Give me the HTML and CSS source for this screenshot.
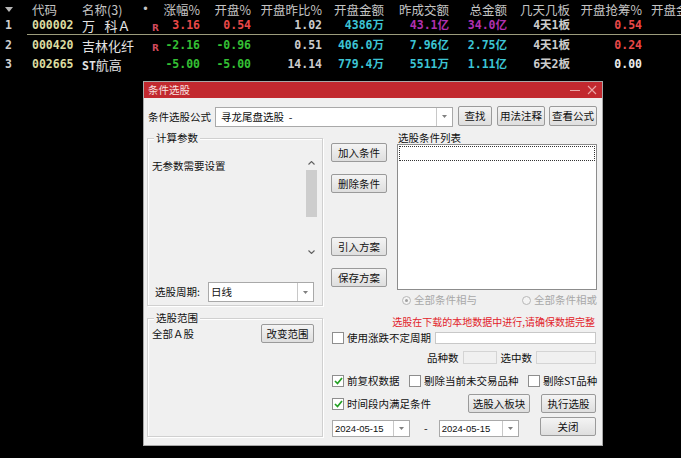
FILE: index.html
```html
<!doctype html>
<html lang="zh-CN">
  <head>
    <meta charset="UTF-8" />
    <title>条件选股</title>
    <link rel="stylesheet" href="styles.css">
  </head>
  <body>
    <div class="quotes">
      <div class="qrow head">
        <span class="c-idx"><svg width="8" height="6" viewBox="0 0 8 6"><polygon points="0,0 8,0 4,5" fill="#b8b8b8"/></svg></span>
        <span class="c-code cjk">代码</span>
        <span class="c-name cjk">名称(3)</span>
        <span class="c-flag">•</span>
        <span class="num cjk">涨幅%</span>
        <span class="num cjk">开盘%</span>
        <span class="num cjk">开盘昨比%</span>
        <span class="num cjk">开盘金额</span>
        <span class="num cjk">昨成交额</span>
        <span class="num cjk">总金额</span>
        <span class="num cjk">几天几板</span>
        <span class="num cjk">开盘抢筹%</span>
        <span class="c-last cjk">开盘金</span>
      </div>
      <div class="qrow sel">
        <span class="c-idx">1</span>
        <span class="c-code">000002</span>
        <span class="c-name cjk">万&ensp; 科Ａ</span>
        <span class="c-flag"><b class="r">R</b></span>
        <span class="num red">3.16</span>
        <span class="num red">0.54</span>
        <span class="num gray">1.02</span>
        <span class="num cyan">4386万</span>
        <span class="num purple">43.1亿</span>
        <span class="num purple">34.0亿</span>
        <span class="num gray">4天1板</span>
        <span class="num red">0.54</span>
        <span class="c-last"></span>
      </div>
      <div class="qrow">
        <span class="c-idx">2</span>
        <span class="c-code">000420</span>
        <span class="c-name cjk">吉林化纤</span>
        <span class="c-flag"><b class="r">R</b></span>
        <span class="num green">-2.16</span>
        <span class="num green">-0.96</span>
        <span class="num gray">0.51</span>
        <span class="num cyan">406.0万</span>
        <span class="num cyan">7.96亿</span>
        <span class="num cyan">2.75亿</span>
        <span class="num gray">4天1板</span>
        <span class="num red">0.24</span>
        <span class="c-last"></span>
      </div>
      <div class="qrow">
        <span class="c-idx">3</span>
        <span class="c-code">002665</span>
        <span class="c-name cjk"><b class="st">ST</b>航高</span>
        <span class="c-flag"></span>
        <span class="num green">-5.00</span>
        <span class="num green">-5.00</span>
        <span class="num gray">14.14</span>
        <span class="num cyan">779.4万</span>
        <span class="num cyan">5511万</span>
        <span class="num cyan">1.11亿</span>
        <span class="num gray">6天2板</span>
        <span class="num white">0.00</span>
        <span class="c-last"></span>
      </div>
    </div>

    <div class="dialog">
      <div class="titlebar">
        <span class="title">条件选股</span>
        <span class="win-btns">
          <svg width="10" height="10" viewBox="0 0 10 10"><line x1="0" y1="5.5" x2="10" y2="5.5" stroke="#eaa6a6" stroke-width="1"/></svg>
          <svg width="10" height="10" viewBox="0 0 10 10"><path d="M1 1 L9 9 M9 1 L1 9" stroke="#eaa6a6" stroke-width="1.1"/></svg>
        </span>
      </div>

      <div class="dlg-body">
        <div class="formula-row">
          <span class="formula-label">条件选股公式</span>
          <div class="combo formula-combo">
            <span class="combo-text">寻龙尾盘选股&nbsp;&nbsp;-</span>
            <span class="combo-arrow"><svg width="5" height="3" viewBox="0 0 5 3"><polygon points="0,0 5,0 2.5,3" fill="#808080"/></svg></span>
          </div>
          <button class="btn btn-find">查找</button>
          <button class="btn btn-wide">用法注释</button>
          <button class="btn btn-wide btn-tight">查看公式</button>
        </div>

        <div class="main">
          <div class="left-col">
            <div class="group group-params">
              <span class="group-title">计算参数</span>
              <div class="params">
                <span class="params-text">无参数需要设置</span>
                <div class="vscroll">
                  <span class="sb-arrow"><svg width="7" height="4" viewBox="0 0 7 4"><polyline points="0.5,3.5 3.5,0.5 6.5,3.5" fill="none" stroke="#606060" stroke-width="1.1"/></svg></span>
                  <span class="sb-thumb"></span>
                  <span class="sb-track"></span>
                  <span class="sb-arrow"><svg width="7" height="4" viewBox="0 0 7 4"><polyline points="0.5,0.5 3.5,3.5 6.5,0.5" fill="none" stroke="#606060" stroke-width="1.1"/></svg></span>
                </div>
              </div>
              <div class="period-row">
                <span>选股周期:</span>
                <div class="combo period-combo">
                  <span class="combo-text">日线</span>
                  <span class="combo-arrow"><svg width="5" height="3" viewBox="0 0 5 3"><polygon points="0,0 5,0 2.5,3" fill="#808080"/></svg></span>
                </div>
              </div>
            </div>

            <div class="group group-range">
              <span class="group-title">选股范围</span>
              <div class="range-row">
                <span>全部Ａ股</span>
                <button class="btn btn-range">改变范围</button>
              </div>
            </div>
          </div>

          <div class="right-col">
            <div class="top-block">
              <div class="btn-col">
                <button class="btn btn-side">加入条件</button>
                <button class="btn btn-side">删除条件</button>
                <button class="btn btn-side gap-big">引入方案</button>
                <button class="btn btn-side">保存方案</button>
              </div>
              <div class="list-col">
                <span class="list-label">选股条件列表</span>
                <div class="listbox"><div class="focus-row"></div></div>
              </div>
            </div>

            <div class="radio-row">
              <span class="radio-item"><span class="radio on"></span>全部条件相与</span>
              <span class="radio-item second"><span class="radio"></span>全部条件相或</span>
            </div>

            <div class="warn">选股在下载的本地数据中进行,请确保数据完整</div>

            <div class="check-row">
              <span class="check"></span>
              <span class="check-text">使用涨跌不定周期</span>
              <span class="field field-period"></span>
            </div>

            <div class="count-row">
              <span>品种数</span>
              <span class="field field-count"></span>
              <span>选中数</span>
              <span class="field field-sel"></span>
            </div>

            <div class="opt-row">
              <span class="opt"><span class="check on"><svg width="9" height="8" viewBox="0 0 9 8"><polyline points="1,4 3.5,6.5 8,1" fill="none" stroke="#23a023" stroke-width="1.7"/></svg></span>前复权数据</span>
              <span class="opt"><span class="check"></span>剔除当前未交易品种</span>
              <span class="opt"><span class="check"></span>剔除ST品种</span>
            </div>

            <div class="time-row">
              <span class="opt"><span class="check on"><svg width="9" height="8" viewBox="0 0 9 8"><polyline points="1,4 3.5,6.5 8,1" fill="none" stroke="#23a023" stroke-width="1.7"/></svg></span>时间段内满足条件</span>
              <div class="time-btns">
                <button class="btn btn-block">选股入板块</button>
                <button class="btn btn-run">执行选股</button>
              </div>
            </div>

            <div class="date-row">
              <div class="combo date-combo">
                <span class="combo-text date-text">2024-05-15</span>
                <span class="combo-arrow"><svg width="5" height="3" viewBox="0 0 5 3"><polygon points="0,0 5,0 2.5,3" fill="#808080"/></svg></span>
              </div>
              <span class="dash">-</span>
              <div class="combo date-combo wide">
                <span class="combo-text date-text">2024-05-15</span>
                <span class="combo-arrow"><svg width="5" height="3" viewBox="0 0 5 3"><polygon points="0,0 5,0 2.5,3" fill="#808080"/></svg></span>
              </div>
              <button class="btn btn-close">关闭</button>
            </div>
          </div>
        </div>
      </div>
    </div>
  </body>
</html>
```

FILE: styles.css
```css
* {
  box-sizing: border-box;
}

body {
  margin: 0;
  width: 681px;
  height: 458px;
  background: #000;
  overflow: hidden;
  position: relative;
  font-family: "DejaVu Sans Mono", "Noto Sans CJK SC", monospace;
}

/* quote table */

.quotes {
  width: 681px;
  padding-top: 3px;
}

.qrow {
  display: grid;
  grid-template-columns: 27px 48px 65px 20px 41px 51px 71px 62px 65px 58px 63px 72px 1fr;
  height: 19.5px;
  line-height: 19.5px;
  font-size: 11.5px;
  font-weight: bold;
  white-space: nowrap;
}

.qrow.head {
  height: 13px;
  line-height: 13px;
  font-weight: normal;
  color: #c4c4c4;
}

.qrow.head .cjk {
  font-size: 12.5px;
}

.qrow.sel {
  background: linear-gradient(#9c9c7c, #9c9c7c) no-repeat 27px 18px / calc(100% - 27px) 1px;
}

.cjk {
  font-family: "Noto Sans CJK SC", sans-serif;
  font-size: 13px;
  font-weight: normal;
}

.c-idx {
  padding-left: 5px;
  color: #d0d0d0;
}

.head .c-idx {
  display: flex;
  align-items: center;
}

.c-code {
  padding-left: 5px;
  color: #dcdca0;
}

.head .c-code,
.head .c-name {
  color: #c4c4c4;
}

.c-name {
  padding-left: 7px;
  color: #e4e4e4;
}

.st {
  font-family: "DejaVu Sans Mono", monospace;
  font-size: 11.5px;
}

.c-flag {
  padding-left: 2px;
}

.r {
  display: inline-block;
  margin-left: 10px;
  padding-top: 3px;
  font-family: "DejaVu Sans", sans-serif;
  font-size: 9px;
  color: #d04a5c;
}

.num {
  text-align: right;
  padding-right: 1px;
}

.c-last {
  padding-left: 8px;
}

.red { color: #e84848; }
.green { color: #34c034; }
.gray { color: #cccccc; }
.white { color: #ececec; }
.cyan { color: #3cc4d4; }
.purple { color: #b030b0; }

/* dialog */

.dialog {
  position: absolute;
  left: 143px;
  top: 81px;
  width: 460px;
  height: 365px;
  background: #f0f0f0;
  border: 1px solid #a8a8a8;
  font-family: "Noto Sans CJK SC", sans-serif;
  font-size: 10.5px;
  line-height: 12px;
  color: #101010;
}

.titlebar {
  height: 16px;
  background: #c2292f;
  display: flex;
  align-items: center;
  justify-content: space-between;
  padding: 0 5px 0 4px;
}

.title {
  color: #f7e0e0;
}

.win-btns {
  display: flex;
  gap: 7px;
}

.dlg-body {
  padding: 0 5px 0 3px;
}

.formula-row {
  display: flex;
  align-items: center;
  margin-top: 8px;
  height: 21px;
}

.formula-label {
  width: 68px;
  padding-left: 1px;
}

.combo {
  display: flex;
  height: 20px;
  background: #fff;
  border: 1px solid #a9a9a9;
}

.combo-text {
  flex: 1;
  display: flex;
  align-items: center;
  padding-left: 5px;
  white-space: nowrap;
}

.combo-arrow {
  width: 16px;
  border-left: 1px solid #c8c8c8;
  display: flex;
  align-items: center;
  justify-content: center;
}

.formula-combo {
  width: 238px;
}

.btn {
  font-family: "Noto Sans CJK SC", sans-serif;
  font-size: 10.5px;
  line-height: 12px;
  color: #101010;
  padding: 0;
  height: 19px;
  background: linear-gradient(#f4f4f4, #dedede);
  border: 1px solid #9a9a9a;
  border-radius: 2px;
}

.btn-find {
  width: 34px;
  height: 20px;
  margin-left: 5px;
  margin-bottom: 1px;
}

.btn-wide {
  width: 48px;
  height: 20px;
  margin-left: 5px;
  margin-bottom: 1px;
}

.btn-tight {
  margin-left: 4px;
}

.main {
  display: grid;
  grid-template-columns: 176px 266px;
  column-gap: 8px;
  margin-top: 5px;
}

.left-col {
  display: flex;
  flex-direction: column;
}

.group {
  position: relative;
  border: 1px solid #d0d0d0;
  box-shadow: inset 1px 1px 0 #fff, 1px 1px 0 #fff;
}

.group-title {
  position: absolute;
  top: -7px;
  left: 6px;
  padding: 0 2px;
  background: #f0f0f0;
}

.group-params {
  margin-top: 6px;
  height: 168px;
}

.params {
  display: flex;
  margin-top: 18px;
  height: 101px;
}

.params-text {
  flex: 1;
  padding: 3px 0 0 4px;
}

.vscroll {
  width: 11px;
  margin-right: 5px;
  display: flex;
  flex-direction: column;
}

.sb-arrow {
  height: 12px;
  display: flex;
  align-items: center;
  justify-content: center;
}

.sb-thumb {
  height: 47px;
  margin-top: 1px;
  background: #cdcdcd;
}

.sb-track {
  flex: 1;
}

.period-row {
  display: flex;
  align-items: center;
  margin-top: 24px;
  padding-left: 7px;
  gap: 8px;
}

.period-combo {
  width: 106px;
}

.period-combo .combo-text {
  padding-left: 2px;
}

.group-range {
  margin-top: 12px;
  height: 119px;
}

.range-row {
  display: flex;
  align-items: center;
  justify-content: space-between;
  margin-top: 5px;
  padding: 0 8px 0 4px;
}

.btn-range {
  width: 53px;
}

.right-col {
  display: flex;
  flex-direction: column;
}

.top-block {
  display: flex;
  gap: 10px;
  height: 158px;
}

.btn-col {
  width: 56px;
  display: flex;
  flex-direction: column;
  padding-top: 11px;
  gap: 12px;
}

.btn-side {
  width: 56px;
}

.gap-big {
  margin-top: 32px;
}

.list-col {
  width: 200px;
  display: flex;
  flex-direction: column;
}

.list-label {
  height: 12px;
  padding-left: 1px;
}

.listbox {
  flex: 1;
  background: #fff;
  border: 1px solid #8c8c8c;
  padding: 1px;
}

.focus-row {
  height: 15px;
  border: 1px dotted #333;
}

.radio-row {
  display: flex;
  align-items: center;
  margin-top: 4px;
  height: 12px;
  padding-left: 71px;
  color: #a8a8a8;
}

.radio-item {
  display: flex;
  align-items: center;
  gap: 3px;
}

.radio-item.second {
  margin-left: 45px;
}

.radio {
  width: 9px;
  height: 9px;
  border-radius: 50%;
  border: 1px solid #b8b8b8;
  background: #f4f4f4;
  display: flex;
  align-items: center;
  justify-content: center;
}

.radio.on::after {
  content: "";
  width: 3px;
  height: 3px;
  border-radius: 50%;
  background: #a0a0a0;
}

.warn {
  margin-top: 10px;
  height: 12px;
  text-align: right;
  padding-right: 2px;
  font-size: 10px;
  color: #e2232a;
  white-space: nowrap;
}

.check-row {
  display: flex;
  align-items: center;
  margin-top: 4px;
  height: 12px;
  padding-left: 1px;
}

.check {
  width: 12px;
  height: 12px;
  border: 1px solid #8e8e8e;
  background: #fff;
  display: inline-flex;
  align-items: center;
  justify-content: center;
  flex-shrink: 0;
}

.check-text {
  margin-left: 3px;
}

.field {
  height: 12px;
  background: #fff;
  border: 1px solid #c8c8c8;
}

.field-period {
  margin-left: auto;
  width: 161px;
  margin-right: 1px;
}

.count-row {
  display: flex;
  align-items: center;
  justify-content: flex-end;
  gap: 4px;
  margin-top: 7px;
  height: 13px;
  padding-right: 1px;
}

.field-count,
.field-sel {
  height: 13px;
  background: #f0f0f0;
  border-color: #d4d4d4;
}

.field-count {
  width: 34px;
}

.field-sel {
  width: 60px;
}

.opt-row {
  display: grid;
  grid-template-columns: 77px 119px 1fr;
  align-items: center;
  margin-top: 10px;
  height: 13px;
  padding-left: 1px;
}

.opt {
  display: flex;
  align-items: center;
  gap: 3px;
  white-space: nowrap;
}

.time-row {
  display: flex;
  align-items: center;
  margin-top: 7px;
  height: 19px;
  padding-left: 1px;
}

.time-btns {
  margin-left: auto;
  display: flex;
  gap: 11px;
  padding-right: 1px;
}

.btn-block {
  width: 62px;
}

.btn-run {
  width: 55px;
}

.date-row {
  display: flex;
  align-items: flex-start;
  margin-top: 4px;
  height: 20px;
  padding-left: 1px;
}

.date-combo {
  width: 78px;
  height: 17px;
  margin-top: 3px;
}

.date-combo.wide {
  width: 80px;
}

.date-text {
  font-family: "Liberation Sans", sans-serif;
  font-size: 9.5px;
  padding-left: 2px;
}

.dash {
  margin: 5px 11px 0 14px;
}

.btn-close {
  margin-left: auto;
  width: 56px;
  margin-right: 1px;
}
```
